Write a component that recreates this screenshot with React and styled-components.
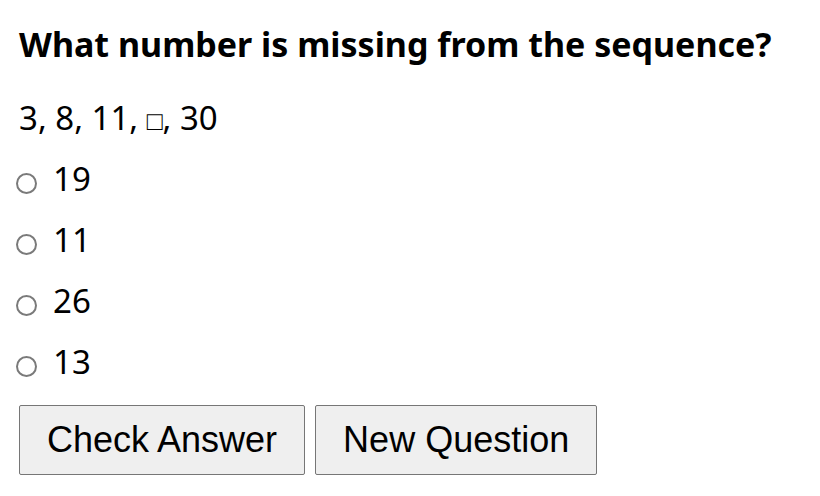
import React, { useState } from 'react';
import styled, { createGlobalStyle } from 'styled-components';

const GlobalStyle = createGlobalStyle`
  body {
    margin: 0;
    background: #fff;
    font-family: "Noto Sans", "Open Sans", sans-serif;
    color: #000;
  }
`;

const Wrapper = styled.div`
  padding: 0 19px;
`;

const Title = styled.h2`
  margin: 19px 0 18px;
  font-size: 34px;
  line-height: 50px;
  font-weight: 700;
`;

const Sequence = styled.div`
  font-size: 33px;
  line-height: 61px;
`;

const Box = styled.span`
  font-size: 26px;
`;

const Options = styled.div`
  display: flex;
  flex-direction: column;
  margin-top: -3px;
`;

const Option = styled.label`
  display: flex;
  align-items: baseline;
  gap: 16px;
  margin-left: -3px;
  font-size: 33px;
  line-height: 61px;
`;

const Radio = styled.input`
  appearance: none;
  width: 21px;
  height: 21px;
  margin: 0;
  border: 2px solid #7a7a7a;
  border-radius: 50%;
  background: #fff;
  transform: translateY(3px);
  &:checked {
    border: 6px solid #0075ff;
  }
`;

const Buttons = styled.div`
  display: flex;
  gap: 10px;
  margin-top: 13px;
`;

const Button = styled.button`
  height: 70px;
  padding: 0 27px;
  background: #efefef;
  border: 1px solid #767676;
  border-radius: 2px;
  font-family: "Liberation Sans", Arial, sans-serif;
  font-size: 36px;
  color: #000;
`;

const choices = ['19', '11', '26', '13'];

export default function App() {
  const [picked, setPicked] = useState(null);
  return (
    <Wrapper>
      <GlobalStyle />
      <Title>What number is missing from the sequence?</Title>
      <Sequence>
        3, 8, 11, <Box>□</Box>, 30
      </Sequence>
      <Options>
        {choices.map((c) => (
          <Option key={c}>
            <Radio
              type="radio"
              name="answer"
              checked={picked === c}
              onChange={() => setPicked(c)}
            />
            {c}
          </Option>
        ))}
      </Options>
      <Buttons>
        <Button>Check Answer</Button>
        <Button>New Question</Button>
      </Buttons>
    </Wrapper>
  );
}
